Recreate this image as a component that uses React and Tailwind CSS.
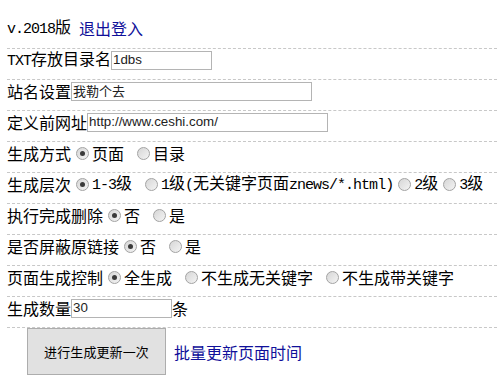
import React from "react";

const M = ({ children }) => (
  <span className="font-['Liberation_Mono'] text-[15px] tracking-[-1px]">{children}</span>
);

const R = ({ checked }) => (
  <span className="ml-[5px] mr-[3px] flex h-[13px] w-[13px] shrink-0 items-center justify-center rounded-full border border-[#a3a3a3] bg-linear-to-br from-[#d6d6d6] to-[#f4f4f4]">
    {checked && <span className="h-[5px] w-[5px] rounded-full bg-[#3a3a3a]" />}
  </span>
);

const Row = ({ children, first }) => (
  <div
    className={
      first
        ? "h-[48px] pt-[18px]"
        : "h-[31px] border-t border-dashed border-[#c8c8c8] pt-[1px]"
    }
  >
    <div className="flex h-[20px] items-center whitespace-nowrap">{children}</div>
  </div>
);

const Input = ({ w, value, cjk }) => (
  <div
    className={`h-[19px] ${w} flex items-center border border-[#b4b4b4] bg-white px-[1px] text-[#222] ${
      cjk ? "text-[13px] font-['Noto_Sans_CJK_SC']" : "text-[13.33px] font-['Liberation_Sans']"
    }`}
  >
    {value}
  </div>
);

export default function App() {
  return (
    <div className="w-[497px] h-[383px] overflow-hidden bg-white pl-[7px] text-[16px] leading-[20px] text-black font-['Noto_Sans_CJK_SC',sans-serif]">
      <Row first>
        <span>
          <M>v.2018</M>版
        </span>
        <a className="ml-[8px] text-[#10109a]">退出登入</a>
      </Row>
      <Row>
        <span>
          <M>TXT</M>存放目录名
        </span>
        <Input w="w-[101px]" value="1dbs" />
      </Row>
      <Row>
        <span>站名设置</span>
        <Input w="w-[241px]" value="我勒个去" cjk />
      </Row>
      <Row>
        <span>定义前网址</span>
        <Input w="w-[241px]" value="http://www.ceshi.com/" />
      </Row>
      <Row>
        <span>生成方式</span>
        <R checked />
        <span className="mr-[8px]">页面</span>
        <R />
        <span>目录</span>
      </Row>
      <Row>
        <span>生成层次</span>
        <R checked />
        <span className="mr-[8px]">
          <M>1-3</M>级
        </span>
        <R />
        <span>
          <M>1</M>级<M>(</M>无关键字页面<M>znews/*.html)</M>
        </span>
        <R />
        <span>
          <M>2</M>级
        </span>
        <R />
        <span>
          <M>3</M>级
        </span>
      </Row>
      <Row>
        <span>执行完成删除</span>
        <R checked />
        <span className="mr-[8px]">否</span>
        <R />
        <span>是</span>
      </Row>
      <Row>
        <span>是否屏蔽原链接</span>
        <R checked />
        <span className="mr-[8px]">否</span>
        <R />
        <span>是</span>
      </Row>
      <Row>
        <span>页面生成控制</span>
        <R checked />
        <span className="mr-[8px]">全生成</span>
        <R />
        <span className="mr-[8px]">不生成无关键字</span>
        <R />
        <span>不生成带关键字</span>
      </Row>
      <Row>
        <span>生成数量</span>
        <Input w="w-[101px]" value="30" />
        <span>条</span>
      </Row>
      <div className="flex items-center border-t border-dashed border-[#c8c8c8]">
        <button className="ml-[20px] h-[47px] w-[139px] border border-[#adadad] bg-[#e1e1e1] text-[13px] tracking-[0.1px] text-black">
          进行生成更新一次
        </button>
        <a className="ml-[8px] text-[#10109a]">批量更新页面时间</a>
      </div>
    </div>
  );
}
